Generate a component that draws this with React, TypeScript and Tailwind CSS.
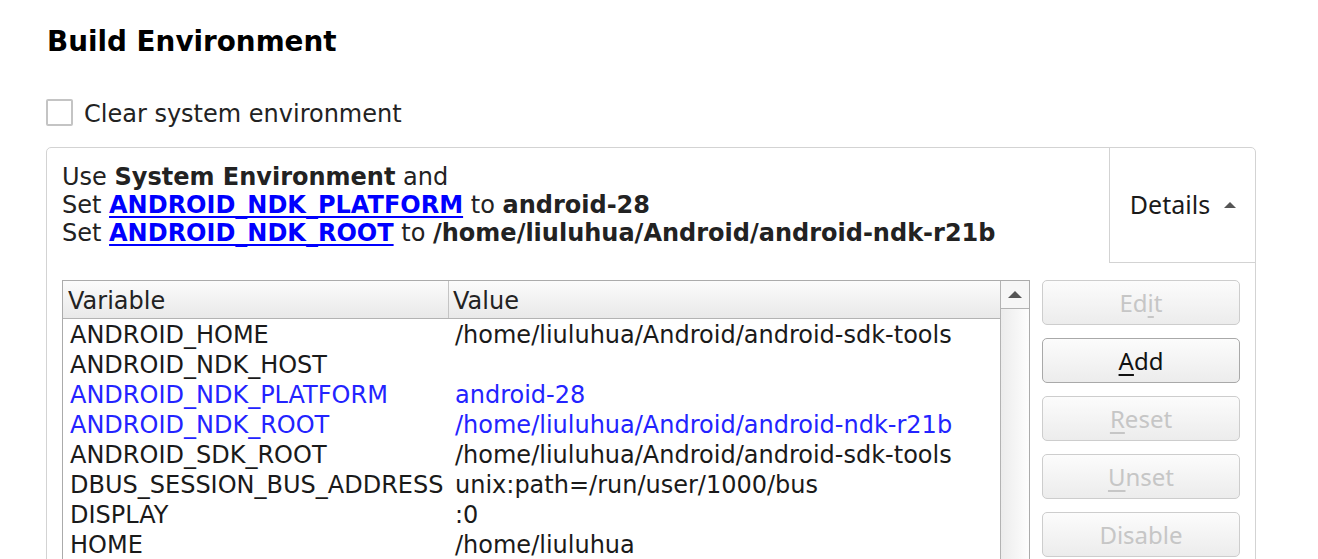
const rows = [
  { name: "ANDROID_HOME", value: "/home/liuluhua/Android/android-sdk-tools", changed: false },
  { name: "ANDROID_NDK_HOST", value: "", changed: false },
  { name: "ANDROID_NDK_PLATFORM", value: "android-28", changed: true },
  { name: "ANDROID_NDK_ROOT", value: "/home/liuluhua/Android/android-ndk-r21b", changed: true },
  { name: "ANDROID_SDK_ROOT", value: "/home/liuluhua/Android/android-sdk-tools", changed: false },
  { name: "DBUS_SESSION_BUS_ADDRESS", value: "unix:path=/run/user/1000/bus", changed: false },
  { name: "DISPLAY", value: ":0", changed: false },
  { name: "HOME", value: "/home/liuluhua", changed: false },
  { name: "LANG", value: "en_US.UTF-8", changed: false },
];

const buttons = [
  { pre: "Ed", key: "i", post: "t", enabled: false },
  { pre: "", key: "A", post: "dd", enabled: true },
  { pre: "", key: "R", post: "eset", enabled: false },
  { pre: "", key: "U", post: "nset", enabled: false },
  { pre: "Disable", key: "", post: "", enabled: false },
];

const dejavu = "font-['DejaVu_Sans',sans-serif]";

const App = () => {
  return (
    <div className={`h-[559px] w-[1318px] overflow-hidden bg-white text-[#222] ${dejavu}`}>
      <div className="pl-[47px] pt-[25px]">
        <h2 className="text-[27.8px] leading-[34px] font-bold text-black">Build Environment</h2>
      </div>

      {/* Clear system environment checkbox */}
      <div className="mt-[38px] ml-[46px] flex items-center gap-[11px]">
        <div className="h-[27px] w-[27px] rounded-[2px] border-2 border-[#c4c4c4] bg-white" />
        <span className="text-[24px] leading-[28px] mt-[3px]">Clear system environment</span>
      </div>

      {/* Environment panel */}
      <div className="mt-[19px] ml-[46px] w-[1210px] rounded-t-[5px] border border-[#d3d3d3] h-[500px]">
        <div className="flex">
          <div className="flex-1 pl-[15px] pt-[15px] text-[24px] leading-[28px]">
            <div>
              Use <b>System Environment</b> and
            </div>
            <div>
              Set <a className="font-bold text-[#0000ff] underline underline-offset-[3px]">ANDROID_NDK_PLATFORM</a> to{" "}
              <b>android-28</b>
            </div>
            <div>
              Set <a className="font-bold text-[#0000ff] underline underline-offset-[3px]">ANDROID_NDK_ROOT</a> to{" "}
              <b>/home/liuluhua/Android/android-ndk-r21b</b>
            </div>
          </div>
          <div className="flex h-[115px] w-[146px] items-center justify-center gap-[13px] rounded-tr-[5px] border-l border-b border-[#d3d3d3] font-['Noto_Sans',sans-serif] text-[25px] text-[#1a1a1a]">
            <span className="mt-[-1px] pl-[2px]">Details</span>
            <svg width="14" height="8" viewBox="0 0 14 8">
              <path d="M1 7 L7 1 L13 7 Z" fill="#555" />
            </svg>
          </div>
        </div>

        <div className="flex gap-[12px] px-[15px] pt-[17px]">
          {/* Variable table */}
          <div className="flex w-[968px] h-[320px] border border-[#ababab] bg-white">
            <div className="flex-1">
              <div className="flex h-[38px] border-b border-[#b3b3b3] bg-gradient-to-b from-[#fbfbfb] to-[#e9e9e9] text-[24px] leading-[40px]">
                <div className="w-[386px] border-r border-[#c4c4c4] pl-[5px]">Variable</div>
                <div className="flex-1 pl-[4px]">Value</div>
              </div>
              {rows.map((r) => (
                <div
                  key={r.name}
                  className={`flex h-[30px] text-[24px] leading-[32px] ${r.changed ? "text-[#2323ff]" : "text-[#1a1a1a]"}`}
                >
                  <div className="w-[387px] pl-[7px] whitespace-nowrap">{r.name}</div>
                  <div className="flex-1 pl-[5px] whitespace-nowrap">{r.value}</div>
                </div>
              ))}
            </div>
            <div className="w-[29px] border-l border-[#b3b3b3] bg-gradient-to-r from-[#ececec] to-[#fdfdfd]">
              <div className="flex h-[28px] items-center justify-center border-b border-[#b3b3b3] bg-[#f6f6f6]">
                <svg width="16" height="9" viewBox="0 0 16 9">
                  <path d="M1 8 L8 1 L15 8 Z" fill="#555" />
                </svg>
              </div>
            </div>
          </div>

          {/* Action buttons */}
          <div className="flex w-[198px] flex-col gap-[13px]">
            {buttons.map((b, i) => (
              <button
                key={i}
                className={`h-[45px] rounded-[5px] border bg-gradient-to-b from-[#fcfcfc] to-[#ececec] font-['Noto_Sans',sans-serif] text-[24px] leading-[40px] ${
                  b.enabled ? "border-[#a9a9a9] text-[#111]" : "border-[#cdcdcd] text-[#c6c6c6]"
                }`}
              >
                {b.pre}
                {b.key && <span className="underline underline-offset-[4px]">{b.key}</span>}
                {b.post}
              </button>
            ))}
          </div>
        </div>
      </div>
    </div>
  );
};

export default App;
